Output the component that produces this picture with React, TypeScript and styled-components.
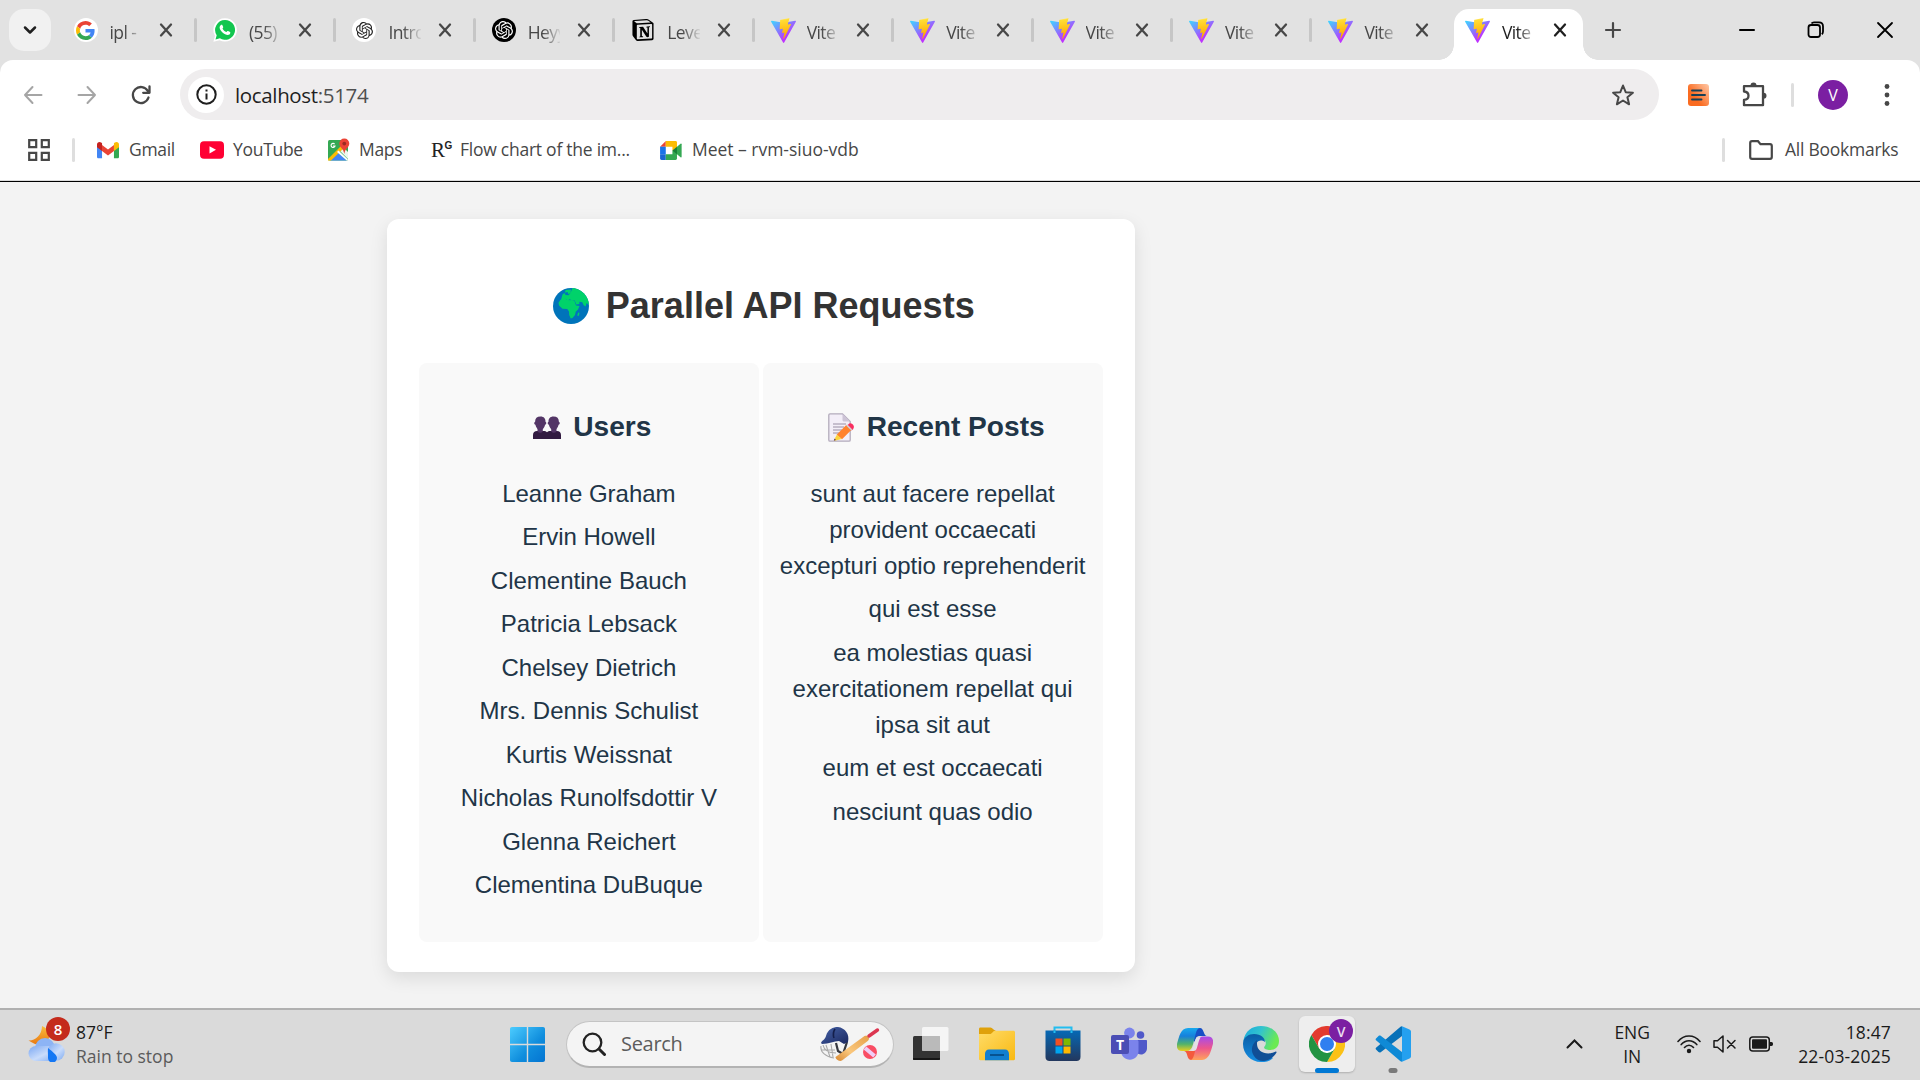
import React from 'react';
import styled, { createGlobalStyle } from 'styled-components';
import { SiOpenai, SiNotion } from 'react-icons/si';

const Global = createGlobalStyle`
  * { box-sizing: border-box; }
  body { margin: 0; width: 1920px; height: 1080px; overflow: hidden; }
  svg { display: block; flex: none; }
`;

const Screen = styled.div`
  width: 1920px;
  height: 1080px;
  display: flex;
  flex-direction: column;
  background: #e2e2e2;
  font-family: 'Open Sans', 'Noto Sans', sans-serif;
  color: #474747;
`;

const TabStrip = styled.header`
  height: 60px;
  display: flex;
  align-items: flex-start;
  padding-left: 9px;
`;

const TabSearch = styled.div`
  width: 42px;
  height: 42px;
  margin: 9px 6.5px 0 0;
  border-radius: 15px;
  background: #f1f1f1;
  display: grid;
  place-items: center;
`;

const Tab = styled.div<{ $active?: boolean }>`
  position: relative;
  width: ${p => (p.$active ? 129 : 139.45)}px;
  margin-left: ${p => (p.$active ? 2 : 0)}px;
  height: 51px;
  margin-top: 9px;
  padding-left: ${p => (p.$active ? 11 : 16)}px;
  padding-bottom: 9px;
  display: flex;
  align-items: center;
  border-radius: 15px 15px 0 0;
  background: ${p => (p.$active ? '#fff' : 'transparent')};
  color: ${p => (p.$active ? '#1f1f1f' : '#474747')};

  &::before, &::after {
    content: '';
    display: ${p => (p.$active ? 'block' : 'none')};
    position: absolute;
    bottom: 0;
    width: 15px;
    height: 15px;
  }
  &::before { left: -15px; background: radial-gradient(circle at 0 0, transparent 14.5px, #fff 15px); }
  &::after { right: -15px; background: radial-gradient(circle at 100% 0, transparent 14.5px, #fff 15px); }
`;

const Divider = styled.i<{ $color?: string; $left?: number; $push?: boolean }>`
  flex: none;
  width: 3px;
  height: 24px;
  margin-left: ${p => (p.$push ? 'auto' : `${p.$left ?? 0}px`)};
  border-radius: 2px;
  background: ${p => p.$color ?? '#dedede'};
`;

const TabTitle = styled.span`
  width: 34px;
  margin: 3px 12px 0 12px;
  overflow: hidden;
  white-space: nowrap;
  font-size: 17.5px;
  letter-spacing: -0.6px;
  line-height: 26px;
  mask-image: linear-gradient(90deg, #000 45%, transparent 105%);
`;

const Favicon = styled.span<{ $bg?: string }>`
  width: 24px;
  height: 24px;
  border-radius: 50%;
  background: ${p => p.$bg ?? 'transparent'};
  display: grid;
  place-items: center;
  flex: none;
`;

const WindowButtons = styled.div`
  margin-left: auto;
  height: 60px;
  width: 185px;
  display: flex;
  justify-content: space-between;
  align-items: center;
  padding-right: 23px;
`;

const NewTab = styled.div`
  height: 60px;
  display: flex;
  align-items: center;
  margin-left: 18px;
`;

const Chrome = styled.div`
  height: 122px;
  background: #fff;
  border-radius: 13px 13px 0 0;
  border-bottom: 1px solid #000;
  box-shadow: inset 0 -1px 0 #dcdcdc;
  flex: none;
`;

const Toolbar = styled.div`
  height: 69px;
  display: flex;
  align-items: center;
  padding-left: 21px;
`;

const NavIcons = styled.div`
  display: flex;
  gap: 30px;
  width: 159px;
`;

const Address = styled.div`
  width: 1479px;
  height: 51px;
  border-radius: 26px;
  background: #efedee;
  display: flex;
  align-items: center;
  padding: 0 24px 0 8px;
`;

const InfoDot = styled.span`
  width: 36px;
  height: 36px;
  border-radius: 50%;
  background: #fff;
  display: grid;
  place-items: center;
`;

const Url = styled.span`
  margin: 0 auto 0 11px;
  font-size: 20.5px;
  letter-spacing: -0.35px;
  color: #1f1f1f;
  span { color: #4f4f4f; }
`;

const Avatar = styled.span`
  width: 30px;
  height: 30px;
  margin: 0 34px 0 24px;
  border-radius: 50%;
  background: #7b1fa2;
  color: #fff;
  font-size: 16px;
  display: grid;
  place-items: center;
`;

const Extensions = styled.div`
  display: flex;
  align-items: center;
  margin-left: 29px;
`;

const PuzzleSlot = styled.span`
  margin-left: 32px;
  margin-right: 1px;
`;

const Bookmarks = styled.nav`
  height: 42px;
  display: flex;
  align-items: center;
  padding: 0 22px 0 28px;
`;

const Bookmark = styled.span<{ $left: number; $gap?: number; $width: number; $spacing?: number }>`
  display: flex;
  align-items: center;
  gap: ${p => p.$gap ?? 9}px;
  width: ${p => p.$width}px;
  margin-left: ${p => p.$left}px;
  font-size: 17.5px;
  line-height: 24px;
  letter-spacing: ${p => p.$spacing ?? -0.3}px;
  white-space: nowrap;
`;

const BookmarkText = styled.span`
  margin-top: -2px;
`;

const SerifMark = styled.span`
  font: 21px 'Liberation Serif', serif;
  color: #222;
  letter-spacing: -0.5px;
  width: 20px;
  display: flex;
  align-items: flex-start;
  sup { font: bold 10px/12px 'Liberation Sans', sans-serif; margin-top: 2px; }
`;

const Page = styled.main`
  height: 826px;
  flex: none;
  overflow: hidden;
  background: #f3f3f3;
  padding: 37px 0 0 387px;
  font-family: 'Liberation Sans', Arial, sans-serif;
`;

const Card = styled.section`
  width: 748px;
  height: 753px;
  padding: 63px 32.5px 0 32px;
  border-radius: 12px;
  background: #fff;
  box-shadow: 0 6px 18px rgba(0, 0, 0, 0.1);
`;

const Title = styled.h1`
  margin: 0 0 33px;
  padding-left: 6px;
  height: 48px;
  display: flex;
  justify-content: center;
  align-items: center;
  gap: 17px;
  font-size: 36px;
  line-height: 48px;
  color: #333;
`;

const Columns = styled.div`
  display: grid;
  grid-template-columns: 1fr 1fr;
  gap: 4px;
`;

const Panel = styled.article`
  height: 579px;
  padding: 43px 15px 0;
  border-radius: 8px;
  background: #f9f9f9;
  color: #213547;
`;

const Heading = styled.h3`
  margin: 0 0 28px;
  padding-left: 7px;
  height: 42px;
  display: flex;
  justify-content: center;
  align-items: center;
  gap: 12px;
  font-size: 28.1px;
  line-height: 42px;
`;

const List = styled.ul`
  list-style: none;
  margin: 0;
  padding: 0;
  text-align: center;
  font-size: 24px;
  line-height: 36px;
`;

const Item = styled.li`
  margin-bottom: 7.45px;
`;

const Taskbar = styled.footer`
  height: 72px;
  flex: none;
  display: flex;
  align-items: center;
  padding-bottom: 2px;
  background: #dadada;
  border-top: 2px solid #b0b0b0;
  font-size: 17.5px;
  color: #1a1a1a;
`;

const Weather = styled.div`
  width: 510px;
  padding-left: 28px;
  display: flex;
  gap: 11px;
`;

const TwoLines = styled.div<{ $align?: string; $spacing?: number }>`
  display: flex;
  flex-direction: column;
  line-height: 24px;
  text-align: ${p => p.$align ?? 'left'};
  letter-spacing: ${p => p.$spacing ?? 0}px;
  white-space: nowrap;
`;

const Muted = styled.span`
  color: #5b5b5b;
`;

const SearchBox = styled.div`
  width: 328px;
  height: 47px;
  margin: 0 12px 0 21px;
  padding: 0 13px 0 15px;
  border: 1px solid #c4c4c4;
  border-bottom: 2px solid #b3b3b3;
  border-radius: 24px;
  background: #f4f4f4;
  display: flex;
  align-items: center;
  color: #5c5c5c;
  font-size: 20px;
`;

const SearchLabel = styled.span`
  margin: 0 auto 0 15px;
  letter-spacing: -0.3px;
`;

const Apps = styled.div`
  display: flex;
  gap: 10px;
  margin-left: -3px;
`;

const AppSlot = styled.div<{ $active?: boolean }>`
  position: relative;
  width: 56px;
  height: 56px;
  border-radius: 6px;
  background: ${p => (p.$active ? '#eeeeee' : 'transparent')};
  box-shadow: ${p => (p.$active ? '0 1px 2px rgba(0,0,0,.2)' : 'none')};
  display: grid;
  place-items: center;
`;

const Running = styled.i<{ $wide?: boolean }>`
  position: absolute;
  left: 50%;
  bottom: -1px;
  transform: translateX(-50%);
  width: ${p => (p.$wide ? 24 : 9)}px;
  height: 5px;
  border-radius: 3px;
  background: ${p => (p.$wide ? '#0078d4' : '#7a7a7a')};
`;

const AppBadge = styled.span`
  position: absolute;
  right: 2px;
  top: 3px;
  width: 24px;
  height: 24px;
  border-radius: 50%;
  background: #7b1fa2;
  color: #eadcf0;
  font-size: 14px;
  font-weight: 600;
  display: grid;
  place-items: center;
`;

const AlertBadge = styled(AppBadge)`
  right: -5px;
  top: -8px;
  background: #c42b1c;
  color: #fff;
  font-size: 15px;
`;

const WeatherIcon = styled.div`
  position: relative;
  width: 37px;
  height: 37px;
  margin-top: 5px;
`;

const Tray = styled.div`
  margin-left: auto;
  padding-right: 29px;
  display: flex;
  align-items: center;
`;

const Language = styled(TwoLines)`
  margin: 0 27px 0 31px;
  width: 36px;
`;

const Status = styled.div`
  display: flex;
  gap: 12px;
  margin-right: 24px;
`;

type Stroke = { d: string; size?: number; color?: string; w?: number };
const Line = ({ d, size = 24, color = '#474747', w = 2 }: Stroke) => (
  <svg width={size} height={size} viewBox="0 0 24 24" fill="none" stroke={color} strokeWidth={w} strokeLinecap="round" strokeLinejoin="round">
    <path d={d} />
  </svg>
);

const Close = ({ color = '#474747' }) => <Line d="M7 6.500l10 11M17 6.500l-10 11" size={24} color={color} w={2.3} />;

const GoogleG = () => (
  <svg width="19" height="19" viewBox="0 0 48 48">
    <path fill="#EA4335" d="M24 9.500c3.500 0 6.700 1.200 9.200 3.600l6.900-6.900C35.900 2.400 30.500 0 24 0 14.600 0 6.500 5.400 2.600 13.200l8 6.200C12.400 13.700 17.700 9.500 24 9.500z" />
    <path fill="#4285F4" d="M47 24.600c0-1.600-.2-3.100-.4-4.600H24v9h12.900c-.6 3-2.300 5.500-4.800 7.200l7.700 6C44.400 38 47 31.800 47 24.600z" />
    <path fill="#FBBC05" d="M10.500 28.600c-.5-1.500-.8-3-.8-4.600s.3-3.100.8-4.600l-8-6.200C.9 16.500 0 20.100 0 24s.9 7.500 2.600 10.800z" />
    <path fill="#34A853" d="M24 48c6.500 0 11.900-2.100 15.900-5.800l-7.700-6c-2.200 1.500-4.900 2.300-8.200 2.300-6.300 0-11.600-4.200-13.500-9.900l-8 6.200C6.500 42.600 14.600 48 24 48z" />
  </svg>
);

const WhatsApp = () => (
  <svg width="24" height="24" viewBox="0 0 24 24">
    <path fill="#fff" d="M12 .2A11.600 11.600 0 0 0 2 17.700L.4 23.700l6.200-1.500A11.700 11.700 0 1 0 12 .2z" />
    <path fill="#12c64f" d="M12 2a9.900 9.900 0 0 0-8.300 15.200L2.500 21.500l4.400-1.200A9.900 9.900 0 1 0 12 2z" />
    <path fill="#fff" d="M8.200 6.800c.4-.3.900-.2 1.100.2l.9 2c.1.300 0 .6-.7 1.400.9 1.900 2.100 2.900 4 3.700.9-1.100 1.100-1.300 1.500-1.100l2.100 1c.4.200.3 1.900-.7 2.600-2.900 2-9.700-3-9.800-7-.1-1.100.9-2.300 1.600-2.800z" />
  </svg>
);

const Vite = () => (
  <svg width="25" height="25" viewBox="0 0 256 257">
    <defs>
      <linearGradient id="va" x1="-.8%" x2="57.600%" y1="7.700%" y2="78.400%"><stop offset="0" stopColor="#41D1FF" /><stop offset="1" stopColor="#BD34FE" /></linearGradient>
      <linearGradient id="vb" x1="43.400%" x2="50.300%" y1="2.200%" y2="89%"><stop offset="0" stopColor="#FFEA83" /><stop offset=".083" stopColor="#FFDD35" /><stop offset="1" stopColor="#FFA800" /></linearGradient>
    </defs>
    <path fill="url(#va)" d="M255.153 37.938 134.897 252.976c-2.483 4.440-8.862 4.466-11.382.048L.875 37.958c-2.746-4.814 1.371-10.646 6.827-9.670l120.385 21.517a6.537 6.537 0 0 0 2.322-.004l117.867-21.483c5.438-.991 9.574 4.796 6.877 9.620Z" />
    <path fill="url(#vb)" d="M185.432.063 96.440 17.501a3.268 3.268 0 0 0-2.634 3.014l-5.474 92.456a3.268 3.268 0 0 0 3.997 3.378l24.777-5.718c2.318-.535 4.413 1.507 3.936 3.838l-7.361 36.047c-.495 2.426 1.782 4.500 4.151 3.780l15.304-4.649c2.372-.720 4.652 1.360 4.150 3.788l-11.698 56.621c-.732 3.542 3.979 5.473 5.943 2.437l1.313-2.028 72.516-144.720c1.215-2.423-.880-5.186-3.540-4.672l-25.505 4.922c-2.396.462-4.435-1.770-3.759-4.114l16.646-57.705c.677-2.350-1.370-4.583-3.769-4.113Z" />
  </svg>
);

const Gmail = () => (
  <svg width="22" height="22" viewBox="0 0 24 24">
    <path fill="#4285F4" d="M0 6v13.500C0 20.400.700 21 1.500 21H5.500V10z" />
    <path fill="#34A853" d="M24 6v13.500c0 .9-.7 1.500-1.500 1.500h-4V10z" />
    <path fill="#EA4335" d="M5.500 6.500 12 11.400l6.500-4.900v6.700L12 18l-6.500-4.800z" />
    <path fill="#C5221F" d="M0 6c0-2.700 2.600-3.600 4.600-2.200l.9.7v8.700L0 9z" />
    <path fill="#FBBC04" d="M24 6c0-2.700-2.600-3.600-4.600-2.200l-.9.7v8.700L24 9z" />
  </svg>
);

const YouTube = () => (
  <svg width="24" height="18" viewBox="0 0 24 18"><rect width="24" height="17.500" y=".3" rx="4" fill="#ff0033" /><path fill="#fff" d="m9.500 5.200 6.500 3.600-6.500 3.700z" /></svg>
);

const Maps = () => (
  <svg width="22" height="24" viewBox="0 0 22 24">
    <rect y="2" width="20" height="20.500" rx="1.500" fill="#34A853" />
    <path fill="#4285F4" d="M2 22.500 10.500 14l8.500 8.500z" />
    <path fill="#fff" d="m16 10 4 4v7l-8-8z" opacity=".9" />
    <path fill="#FBBC04" d="m0 21 15-15 2.500 2.500L3 22.500H0z" />
    <path fill="#fff" d="m9 14 1.500-1.500 9.500 9-1.300 1z" />
    <path fill="#EA4335" d="M16.300.5a5 5 0 0 0-5 5.100c0 3.800 4.100 4.400 5 10.400.9-6 5-6.600 5-10.400a5 5 0 0 0-5-5.100z" />
    <circle cx="16.300" cy="5.600" r="1.900" fill="#9c2a20" />
    <path d="M6.600 6.100A2 2 0 1 0 7 8H5" fill="none" stroke="#fff" strokeWidth="1.100" />
  </svg>
);

const Meet = () => (
  <svg width="22" height="19" viewBox="0 0 23 20">
    <path fill="#EA4335" d="M0 6 6 0v6z" />
    <path fill="#1A73E8" d="M0 6h6v8H0z" /><path fill="#1967D2" d="M0 14h6v6H1.500C.6 20 0 19.400 0 18.500z" />
    <path fill="#FBBC04" d="M6 0h10.200c1 0 1.600.6 1.600 1.500V9L13 10V6H6z" />
    <path fill="#34A853" d="M6 14h7v-4l4.800 1v7.500c0 .9-.7 1.500-1.600 1.500H6z" />
    <path fill="#188038" d="m13 10 4.800-4v8z" /><path fill="#34A853" d="M17.800 6 21.600 2.800c.5-.4 1.100-.1 1.100.5v13.400c0 .6-.6.9-1.100.5L17.800 14z" />
  </svg>
);

const Globe = () => (
  <svg width="36" height="36" viewBox="0 0 36 36">
    <defs><clipPath id="earth"><circle cx="18" cy="18" r="18" /></clipPath></defs>
    <circle cx="18" cy="18" r="18" fill="#0074ba" />
    <g clipPath="url(#earth)" fill="#00d26a">
      <path d="M12.500 2 18 1.500 17.500 5l-2.300 1-.5-2-2.700.5zM9.500 6.500l2-1.500 1 2 3 .2L17.500 5l2-5H30l8 8v10l-2.500-1.500-1.800-1.500-1.200 3.500-2-1.500-1.200-2.700-2.800-.5-.2 2.200-3 .5-1.600-4-3.700.5-.9-2-2.300 1.500-2-1.700-2.300 1.700-2.500-.5z" />
      <path d="M7.500 11.800l5-1 2 1.200 3.500.3 3.500.7 1.500 4.500 3.500.5-1.500 3.500-2.300 2.300-.7 3.200-2.500 3-1.800.5-1.500-3.500-.2-3.500-1.700-2.500-4.800-.3L6 17.500l-.5-2.800z" />
      <path d="M25.200 24.800c1.400-.8 1.500.5.500 3-1.500 1-1.600-1.200-.5-3z" />
    </g>
  </svg>
);

const Users = () => (
  <svg width="28" height="24" viewBox="0 0 28 24">
    <path fill="#321b41" d="M0 24v-4c0-2.700 1.700-4 4-4h6.500c1.500 0 2.800.4 3.500 1.300.7-.9 2-1.300 3.500-1.300H24c2.300 0 4 1.300 4 4v4z" />
    <g fill="#533566">
      <path d="M4.500 12h5.300v4.500c-1.400 1.600-3.900 1.600-5.300 0z" /><path d="M18.200 12h5.300v4.500c-1.400 1.600-3.900 1.600-5.300 0z" />
      <path d="M7.500 1.500c3.600 0 5 2.200 5 5.200 1.300.6 1 2.700-.4 3-.6 3-2.400 5-4.800 5s-4.300-2-4.900-5c-1.400-.3-1.700-2.400-.3-3 0-3.400 1.800-5.200 5.400-5.200z" />
      <path d="M20.500 1.500c-3.600 0-5 2.200-5 5.200-1.300.6-1 2.700.4 3 .6 3 2.400 5 4.800 5s4.300-2 4.900-5c1.400-.3 1.700-2.400.3-3 0-3.400-1.800-5.200-5.400-5.200z" />
    </g>
  </svg>
);

const Memo = () => (
  <svg width="27" height="29" viewBox="0 0 27 29">
    <path fill="#f3eef8" stroke="#b4acbc" strokeWidth="1.300" d="M2 .8h12.500l7.700 7.700V27c0 .7-.4 1.200-1.200 1.200H2C1.200 28.200.8 27.700.8 27V2C.8 1.200 1.200.8 2 .8z" />
    <path fill="#cdc4d6" d="M14.500.8V7c0 .9.500 1.500 1.400 1.500h6.300z" />
    <path d="M5 11h13M5 14h11M5 17h9M5 20h6" stroke="#998ea4" strokeWidth="1.200" />
    <path fill="#ff822d" d="m18.500 11.800 5 5-9.500 9.400-5.400-4.400z" />
    <path fill="#f92f60" d="M20 11.700c1.200-1.600 2.800-1.800 4.300-.7s2.400 3 .8 5.200l-1.500 1.300-5-5z" />
    <path fill="#d3d3d3" d="m18.100 12.400 1.100-1.100 5.100 5.100-1.100 1.100z" />
    <path fill="#fcd53f" d="m9 21.500 4.600 4.500-6.900 1.700c-.6.100-.9-.2-.7-.8z" /><path fill="#533566" d="m6.500 25.500 1.500 1.600-2.200.7z" />
  </svg>
);

const WeatherArt = () => (
  <svg width="37" height="37" viewBox="0 0 37 37">
    <defs>
      <linearGradient id="moon" x2="0" y2="1"><stop stopColor="#f9bd3e" /><stop offset="1" stopColor="#e97812" /></linearGradient>
      <linearGradient id="cloud" x2="1" y2="1"><stop stopColor="#7ba8f3" /><stop offset=".55" stopColor="#c9dcfb" /><stop offset="1" stopColor="#7eaaf0" /></linearGradient>
    </defs>
    <path fill="url(#moon)" d="M14 1c7 3 9 9 6 14s-10 7-19.500.5C7 16 14 10 14 1z" />
    <circle cx="17" cy="23" r="10" fill="#8db4f5" />
    <rect x=".5" y="21" width="29" height="15" rx="7.500" fill="url(#cloud)" />
    <circle cx="28" cy="27" r="8.700" fill="url(#cloud)" />
    <path fill="#1477f4" d="M20 23c5 4 9 7 9 10a4.500 4.500 0 0 1-9 0z" />
  </svg>
);

const Cricket = () => (
  <svg width="60" height="36" viewBox="0 0 60 36">
    <defs>
      <linearGradient id="bat" x1="0" y1="1" x2="1" y2="0"><stop stopColor="#d88a35" /><stop offset=".4" stopColor="#fac77c" /><stop offset="1" stopColor="#e6a04a" /></linearGradient>
      <linearGradient id="helm" x2="1" y2="1"><stop stopColor="#4763a8" /><stop offset="1" stopColor="#1a2860" /></linearGradient>
    </defs>
    <path d="M1 20c-1 6 5 11 13 12M3 19c1 5 6 8 13 8M2 24h13M6 19l4 12M11 18l2 13" fill="none" stroke="#a9a9a9" strokeWidth="1.100" />
    <path d="M16 17l2 8 5 3 4-12" fill="none" stroke="#36383f" strokeWidth="2.200" />
    <path fill="url(#helm)" d="M1 17C2 14 5 14 6 10 8 3 13 1 18 1c7 1 12 7 10 15l-4 2-5-3c-5 0-10 3-17 3z" />
    <path d="M15 3c-2 3-2 6-1 9" stroke="#141f4b" strokeWidth="1.600" fill="none" />
    <path fill="url(#bat)" d="M15.500 31 44.500 10c1.800-.8 3.500-.2 4.200 1.200s.2 2.600-1 3.800L22 34.500c-3 1.500-6.500-1.500-6.500-3.500z" />
    <path d="m49 10 8.500-6" stroke="#dc3650" strokeWidth="3.400" strokeLinecap="round" />
    <circle cx="50" cy="26" r="7" fill="#f94d64" /><path d="M45 22l9.500 8" stroke="#f0cdf6" strokeWidth="4" />
  </svg>
);

const Windows = () => (
  <svg width="35" height="35" viewBox="0 0 35 35">
    <defs><linearGradient id="win" gradientUnits="userSpaceOnUse" x1="0" y1="0" x2="35" y2="35"><stop stopColor="#4cccff" /><stop offset=".6" stopColor="#0f8ddd" /><stop offset="1" stopColor="#0474d1" /></linearGradient></defs>
    <path fill="url(#win)" d="M2 0h14.800v16.800H0V2C0 .8.8 0 2 0zM18.200 0H33c1.200 0 2 .8 2 2v14.800H18.200zM0 18.200h16.800V35H2c-1.200 0-2-.8-2-2zM18.200 18.200H35V33c0 1.200-.8 2-2 2H18.200z" />
  </svg>
);

const TaskView = () => (
  <svg width="36" height="36" viewBox="0 0 36 36">
    <rect x="0" y="10" width="27" height="24" rx="1.500" fill="#333" /><path d="M0 33h27" stroke="#0c0c0c" strokeWidth="1.500" />
    <rect x="9" y="1" width="26.500" height="24" rx="1.500" fill="#f8f8f8" opacity=".88" /><path d="M9 10h18v15H9z" fill="#aaa" opacity=".7" />
  </svg>
);

const Folder = () => (
  <svg width="36" height="36" viewBox="0 0 36 36">
    <defs><linearGradient id="fold" x2="1" y2="1"><stop stopColor="#ffdc68" /><stop offset="1" stopColor="#f9b912" /></linearGradient></defs>
    <path fill="#dfa10b" d="M1.500 1.500h10c2 0 3 3 5 3V12H0V3c0-.9.600-1.500 1.500-1.500z" />
    <path fill="url(#fold)" d="M0 8h11c2 0 3-3.300 5-3.300h18.500c.9 0 1.500.6 1.500 1.500V33c0 .7-.5 1.200-1.200 1.200H1.200C.5 34.200 0 33.700 0 33z" />
    <path fill="#127fd0" d="M6 34.200V28c0-2.500 1.500-4.500 4-4.500h16c2.500 0 4 2 4 4.500v6.200z" /><path d="M11 29h14" stroke="#064b85" strokeWidth="1.700" />
  </svg>
);

const Store = () => (
  <svg width="36" height="36" viewBox="0 0 36 36">
    <defs><linearGradient id="sto" x2="0" y2="1"><stop stopColor="#0669b5" /><stop offset="1" stopColor="#23375d" /></linearGradient></defs>
    <path d="M9.500 7V1.500h17V7" fill="none" stroke="#23bdf0" strokeWidth="2" />
    <path fill="url(#sto)" d="M.500 4.500h35V31c0 2.500-1.500 4-4 4h-27c-2.500 0-4-1.500-4-4z" />
    <path d="M9.500 7V4.500M26.500 7V4.500" stroke="#23bdf0" strokeWidth="2" />
    <path fill="#f25022" d="M10.500 12.500h7v7h-7z" /><path fill="#7fba00" d="M18.500 12.500h7v7h-7z" /><path fill="#00a4ef" d="M10.500 20.500h7v7h-7z" /><path fill="#ffb900" d="M18.500 20.500h7v7h-7z" />
  </svg>
);

const TeamsTile = styled.span`
  position: absolute;
  left: 10px;
  top: 19px;
  width: 18px;
  height: 19px;
  border-radius: 2px;
  background: #4b4eb5;
  color: #fff;
  font: bold 14px/19px 'Open Sans', sans-serif;
  text-align: center;
`;

const Teams = () => (
  <svg width="36" height="36" viewBox="0 0 36 36">
    <circle cx="29.500" cy="9" r="3.800" fill="#5059c9" /><circle cx="18.500" cy="7" r="5.400" fill="#7b83eb" />
    <path fill="#5059c9" d="M25 14h10c.6 0 1 .4 1 1v7c0 4-3 6.500-6 6.500-2 0-4-1-5-3z" />
    <path fill="#7b83eb" d="M10 14h16c.9 0 1.500.6 1.500 1.500V25c0 5-4 8.700-8.700 8.700S10 30 10 25z" />
  </svg>
);

const Copilot = () => (
  <svg width="36" height="36" viewBox="0 0 36 36">
    <defs>
      <linearGradient id="ca" x2="0" y2="1"><stop stopColor="#18a9ed" /><stop offset=".35" stopColor="#1680dc" /><stop offset=".7" stopColor="#52b36b" /><stop offset="1" stopColor="#e9cf20" /></linearGradient>
      <linearGradient id="cb" x2="0" y2="1"><stop stopColor="#a64bec" /><stop offset=".5" stopColor="#ed568c" /><stop offset="1" stopColor="#ffa45b" /></linearGradient>
    </defs>
    <path fill="#174fc5" d="M17 2h6c4 0 3.500 8 7 8h-8c-3 0-3 4-5 6z" />
    <path fill="#f45a3d" d="M19 34h-5c-4.500 0-3-9-7-9h8c3 0 3-4 5-6z" />
    <path fill="url(#ca)" d="M11 2h12c-3.500 0-4 5-5.600 11-1.700 7-2.700 12-7.400 12H5c-5 0-6-4-4.500-9 1.500-4.500 3-14 10.500-14z" />
    <path fill="url(#cb)" d="M25 34H13c3.500 0 4-5 5.600-11 1.700-7 2.700-12.500 7.400-12.500h5c5 0 6 4.500 4.500 9C34 24 32.500 34 25 34z" />
    <path fill="#e4e0e6" d="M19.200 11.500h4.300c-1.800 2.500-2.500 7-3.600 10.500-.6 2-1.500 3-3.500 3h-2.300c2.400-3 3.200-8.500 5.100-13.500z" />
  </svg>
);

const Edge = () => (
  <svg width="36" height="36" viewBox="0 0 36 36">
    <defs>
      <linearGradient id="ea" x2="1" y2=".35"><stop stopColor="#18a8df" /><stop offset=".5" stopColor="#32c3ce" /><stop offset="1" stopColor="#6bea53" /></linearGradient>
      <linearGradient id="eb" x2="0" y2="1"><stop stopColor="#0a5ca4" /><stop offset="1" stopColor="#158ee2" /></linearGradient>
    </defs>
    <path fill="url(#ea)" d="M.3 15C2 5 9 0 18 0c11 0 18 7 18 15 0 6-4 9-9 9-4 0-7-1.400-5.500-3.500 3-3.500.5-8-4-8C10 12.500 4 14 .3 15z" />
    <path fill="url(#eb)" d="M0 18C0 11 6 8 11 8c7 0 11 4 11 8-6-4-10 1-9 6 1 7 7 9 13 7l4 3c-3 3-7 4-12 4C8 36 0 28 0 18z" />
    <path fill="#104e96" d="M14 14c-5 4-7 10-3 16 3 5 9 6 14 4 4-1.500 7-5 8.500-7.500.4-.8-.4-1.200-1.200-.8C24 30 14 26 14 18z" />
  </svg>
);

const ChromeLogo = () => (
  <svg width="36" height="36" viewBox="0 0 36 36">
    <path fill="#e33b2e" d="M2.400 9A18 18 0 0 1 33.600 9H18l-7.800 13.500z" />
    <path fill="#fbc116" d="M33.600 9A18 18 0 0 1 18 36l7.800-13.500L18 9z" />
    <path fill="#229342" d="M18 36A18 18 0 0 1 2.400 9l7.800 13.500L18 27l7.800-4.500z" />
    <circle cx="18" cy="18" r="9" fill="#fff" /><circle cx="18" cy="18" r="7" fill="#2f7ff0" />
  </svg>
);

const VSCode = () => (
  <svg width="36" height="36" viewBox="0 0 36 36">
    <path fill="#0871b8" d="m1 23.500 2.500 2.600c.7.6 1.500.6 2.200.1L27 10V.2c-.8 0-1.300.2-1.800.7L1 21.700c-.5.5-.5 1.200 0 1.800z" />
    <path fill="#0f8ad6" d="m1 12.500 2.500-2.600c.7-.6 1.500-.6 2.200-.1L27 26v9.800c-.8 0-1.300-.2-1.800-.7L1 14.300c-.5-.5-.5-1.200 0-1.800z" />
    <path fill="#24a0ef" d="M27 .2 34.500 3.500c1 .5 1.500 1.200 1.500 2.200v24.600c0 1-.5 1.800-1.500 2.200L27 35.800z" />
  </svg>
);

const Wifi = () => (
  <svg width="24" height="20" viewBox="0 0 24 20" fill="none" stroke="#1a1a1a" strokeWidth="1.600" strokeLinecap="round">
    <path d="M1 7.500c6-7.300 16-7.300 22 0M4.200 10.600c4.400-5.200 11.200-5.200 15.600 0M7.500 13.500c2.600-3 6.400-3 9 0" /><circle cx="12" cy="17" r="1.400" fill="#1a1a1a" />
  </svg>
);
const Volume = () => (
  <svg width="24" height="20" viewBox="0 0 24 20" fill="none" stroke="#1a1a1a" strokeWidth="1.500" strokeLinecap="round" strokeLinejoin="round"><path d="M1 6.800h3.500L10 2v16l-5.500-4.800H1zM14.500 6.500l7.500 7.500M22 6.500 14.500 14" /></svg>
);
const Battery = () => (
  <svg width="25" height="20" viewBox="0 0 25 20"><rect x=".8" y="3" width="19.500" height="14" rx="3" fill="none" stroke="#1a1a1a" strokeWidth="1.500" /><rect x="3" y="5.300" width="15" height="9.400" rx="1" fill="#1a1a1a" /><path d="M21 8h1.500c1 0 1.500.8 1.500 2s-.5 2-1.500 2H21z" fill="#1a1a1a" /></svg>
);

const tabs = [
  { title: 'ipl -', icon: <Favicon $bg="#fff"><GoogleG /></Favicon> },
  { title: '(55)', icon: <Favicon><WhatsApp /></Favicon> },
  { title: 'Intro', icon: <Favicon $bg="#fff"><SiOpenai size={17} color="#222" /></Favicon> },
  { title: 'Heyy', icon: <Favicon $bg="#000"><SiOpenai size={18} color="#fff" /></Favicon> },
  { title: 'Leve', icon: <Favicon><SiNotion size={22} color="#000" /></Favicon> },
  ...Array.from({ length: 5 }, () => ({ title: 'Vite', icon: <Favicon><Vite /></Favicon> })),
];

const users = ['Leanne Graham', 'Ervin Howell', 'Clementine Bauch', 'Patricia Lebsack', 'Chelsey Dietrich', 'Mrs. Dennis Schulist', 'Kurtis Weissnat', 'Nicholas Runolfsdottir V', 'Glenna Reichert', 'Clementina DuBuque'];
const posts = ['sunt aut facere repellat provident occaecati excepturi optio reprehenderit', 'qui est esse', 'ea molestias quasi exercitationem repellat qui ipsa sit aut', 'eum et est occaecati', 'nesciunt quas odio'];

export default function App() {
  return (
    <>
      <Global />
      <Screen>
        <TabStrip>
          <TabSearch><Line d="M7 9.500l5 5 5-5" color="#1f1f1f" w={2.500} /></TabSearch>
          {tabs.map((t, i) => (
            <Tab key={i}>
              {t.icon}
              <TabTitle>{t.title}</TabTitle>
              <Close />
              {i < tabs.length - 1 && <Divider $color="#c6c6c6" $left={16} />}
            </Tab>
          ))}
          <Tab $active>
            <Vite />
            <TabTitle>Vite</TabTitle>
            <Close color="#1f1f1f" />
          </Tab>
          <NewTab><Line d="M12 5v14M5 12h14" w={2.200} /></NewTab>
          <WindowButtons>
            <Line d="M5 12h14" color="#000" w={2} />
            <svg width="18" height="18" viewBox="0 0 18 18" fill="none" stroke="#000" strokeWidth="1.800"><rect x="1.500" y="4" width="11.500" height="12" rx="2.500" /><path d="M4.500 2.500C5 1.700 6 1.300 7 1.300h5c2.500 0 4 1.700 4 4v5.200c0 1.300-.3 2-1.200 2.700" /></svg>
            <Line d="M5 5l14 14M19 5l-14 14" color="#000" w={1.800} />
          </WindowButtons>
        </TabStrip>
        <Chrome>
          <Toolbar>
            <NavIcons>
              <Line d="M20.500 12H4M11.500 4 4 12l7.500 8" color="#a5a5a5" />
              <Line d="M3.500 12H20M12.500 4l7.500 8-7.500 8" color="#a5a5a5" />
              <Line d="M19.500 14.500A8 8 0 1 1 18.800 8L20 9.500M20.500 3.500v6.300h-6.300" w={2.300} />
            </NavIcons>
            <Address>
              <InfoDot><svg width="21" height="21" viewBox="0 0 21 21"><circle cx="10.500" cy="10.500" r="9.200" fill="none" stroke="#1f1f1f" strokeWidth="2" /><path d="M10.500 9.500v6M10.500 5.500v2" stroke="#1f1f1f" strokeWidth="2" /></svg></InfoDot>
              <Url>localhost<span>:5174</span></Url>
              <Line d="m12 2.500 2.700 6.700 7.200.5-5.500 4.600 1.700 7L12 17.500l-6.100 3.800 1.700-7L2.100 9.700l7.200-.5z" />
            </Address>
            <Extensions>
              <svg width="21" height="22" viewBox="0 0 21 22"><defs><linearGradient id="ex" x1="1" x2=".3" y2=".6"><stop stopColor="#ffc9a8" /><stop offset="1" stopColor="#fa6b20" /></linearGradient></defs><rect width="21" height="22" rx="3" fill="url(#ex)" /><path d="M4 6.500h9.500M4 11h13M4 15.500h9.500" stroke="#174057" strokeWidth="1.900" strokeLinecap="round" /></svg>
              <PuzzleSlot><svg width="26" height="26" viewBox="0 0 26 26"><path d="M3 4.200h19v19H3v-5.300c6-.5 6-7.900 0-8.400z" fill="none" stroke="#474747" strokeWidth="2.300" strokeLinejoin="round" /><path d="M9.500 3.400a3 3 0 0 1 6 0zM22.500 10.700a3 3 0 0 1 0 6z" fill="#474747" /></svg></PuzzleSlot>
              <Divider $left={23} />
              <Avatar>V</Avatar>
              <svg width="30" height="30" viewBox="0 0 30 30" fill="#474747"><circle cx="5" cy="6.500" r="2.400" /><circle cx="5" cy="15" r="2.400" /><circle cx="5" cy="23.500" r="2.400" /></svg>
            </Extensions>
          </Toolbar>
          <Bookmarks>
            <svg width="22" height="22" viewBox="0 0 22 22" fill="none" stroke="#474747" strokeWidth="2.200"><path d="M1.200 1.200h7v7h-7zM13.800 1.200h7v7h-7zM1.200 13.800h7v7h-7zM13.800 13.800h7v7h-7z" /></svg>
            <Divider $left={22} />
            <Bookmark $left={22} $width={78} $gap={10}><Gmail /><BookmarkText>Gmail</BookmarkText></Bookmark>
            <Bookmark $left={25} $width={103}><YouTube /><BookmarkText>YouTube</BookmarkText></Bookmark>
            <Bookmark $left={25} $width={76}><Maps /><BookmarkText>Maps</BookmarkText></Bookmark>
            <Bookmark $left={27} $width={203} $spacing={-0.25}><SerifMark>R<sup>G</sup></SerifMark><BookmarkText>Flow chart of the im...</BookmarkText></Bookmark>
            <Bookmark $left={26} $width={202} $gap={10} $spacing={-0.02}><Meet /><BookmarkText>Meet – rvm-siuo-vdb</BookmarkText></Bookmark>
            <Divider $push />
            <Bookmark $left={24} $width={149} $gap={12} $spacing={-0.25}><svg width="24" height="20" viewBox="0 0 24 20"><path d="M3 1.200h6l2.500 3H21c1.200 0 1.800.6 1.800 1.800v11c0 1.200-.6 1.800-1.800 1.800H3c-1.200 0-1.800-.6-1.800-1.800V3C1.200 1.800 1.800 1.200 3 1.200z" fill="none" stroke="#474747" strokeWidth="2.200" /></svg><BookmarkText>All Bookmarks</BookmarkText></Bookmark>
          </Bookmarks>
        </Chrome>
        <Page>
          <Card>
            <Title><Globe />Parallel API Requests</Title>
            <Columns>
              <Panel>
                <Heading><Users />Users</Heading>
                <List>{users.map(u => <Item key={u}>{u}</Item>)}</List>
              </Panel>
              <Panel>
                <Heading><Memo />Recent Posts</Heading>
                <List>{posts.map(p => <Item key={p}>{p}</Item>)}</List>
              </Panel>
            </Columns>
          </Card>
        </Page>
        <Taskbar>
          <Weather>
            <WeatherIcon><WeatherArt /><AlertBadge>8</AlertBadge></WeatherIcon>
            <TwoLines><span>87°F</span><Muted>Rain to stop</Muted></TwoLines>
          </Weather>
          <Windows />
          <SearchBox>
            <svg width="24" height="24" viewBox="0 0 24 24" fill="none" stroke="#222" strokeWidth="2.300" strokeLinecap="round"><circle cx="10.500" cy="10.500" r="8.800" /><path d="m17 17 5.500 5.500" strokeWidth="3" /></svg>
            <SearchLabel>Search</SearchLabel>
            <Cricket />
          </SearchBox>
          <Apps>
            <AppSlot><TaskView /></AppSlot>
            <AppSlot><Folder /></AppSlot>
            <AppSlot><Store /></AppSlot>
            <AppSlot><Teams /><TeamsTile>T</TeamsTile></AppSlot>
            <AppSlot><Copilot /></AppSlot>
            <AppSlot><Edge /></AppSlot>
            <AppSlot $active><ChromeLogo /><AppBadge>V</AppBadge><Running $wide /></AppSlot>
            <AppSlot><VSCode /><Running /></AppSlot>
          </Apps>
          <Tray>
            <svg width="17" height="10" viewBox="0 0 17 10" fill="none" stroke="#1a1a1a" strokeWidth="2" strokeLinecap="round"><path d="m1.500 8.500 7-7 7 7" /></svg>
            <Language $align="center"><span>ENG</span><span>IN</span></Language>
            <Status><Wifi /><Volume /><Battery /></Status>
            <TwoLines $align="right" $spacing={0.15}><span>18:47</span><span>22-03-2025</span></TwoLines>
          </Tray>
        </Taskbar>
      </Screen>
    </>
  );
}
